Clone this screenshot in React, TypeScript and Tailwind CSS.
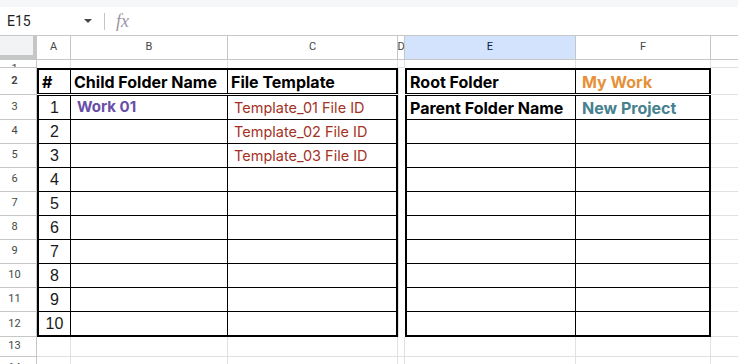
import React from "react";

const headerText = "font-['Roboto',sans-serif] text-[11px] text-[#444746]";

type BodyRow = {
  n: number;
  num: string;
  b?: string;
  c?: string;
  e?: string;
  f?: string;
};

const bodyRows: BodyRow[] = [
  { n: 3, num: "1", b: "Work 01", c: "Template_01 File ID", e: "Parent Folder Name", f: "New Project" },
  { n: 4, num: "2", c: "Template_02 File ID" },
  { n: 5, num: "3", c: "Template_03 File ID" },
  { n: 6, num: "4" },
  { n: 7, num: "5" },
  { n: 8, num: "6" },
  { n: 9, num: "7" },
  { n: 10, num: "8" },
  { n: 11, num: "9" },
  { n: 12, num: "10" },
];

function RowLabel({ n }: { n: number }) {
  return (
    <div
      className={`flex w-[37px] shrink-0 items-center justify-center border-b border-r border-[#c4c7c5] pr-[7px] ${headerText}`}
    >
      {n}
    </div>
  );
}

const ColHeader = ({ label, className }: { label: string; className: string }) => (
  <div
    className={`flex shrink-0 items-center justify-center overflow-hidden border-r border-[#c4c7c5] ${headerText} ${className}`}
  >
    {label}
  </div>
);

export default function App() {
  return (
    <div className="h-[364px] w-[738px] overflow-hidden bg-white font-['Inter',sans-serif]">
      {/* top strip */}
      <div className="h-[7px] bg-[#f6f7f9]" />

      {/* formula bar */}
      <div className="flex h-[29px] items-center border-b border-[#c4c7c5]">
        <div className="flex w-[98px] items-center justify-between pl-[7px] pr-[6px]">
          <span className="font-['Roboto',sans-serif] text-[14px] text-[#1f1f1f]">E15</span>
          <svg width="8" height="4" viewBox="0 0 8 4">
            <polygon points="0,0 8,0 4,4" fill="#444746" />
          </svg>
        </div>
        <div className="ml-[6px] h-[17px] w-px bg-[#c4c7c5]" />
        <span className="ml-[11px] font-['Liberation_Serif',serif] text-[18px] italic text-[#9a96a8]">
          fx
        </span>
      </div>

      {/* column headers */}
      <div className="flex h-[24px] border-b border-[#c4c7c5]">
        <div className="w-[37px] shrink-0 border-b-4 border-r-4 border-[#c4c7c5] bg-[#f1f3f4]" />
        <ColHeader label="A" className="w-[34px]" />
        <ColHeader label="B" className="w-[157px]" />
        <ColHeader label="C" className="w-[170px]" />
        <ColHeader label="D" className="w-[7px]" />
        <div className="flex w-[171px] shrink-0 items-center justify-center border-r border-[#c4c7c5] bg-[#d3e3fd] font-['Roboto',sans-serif] text-[11px] text-[#041e49]">
          E
        </div>
        <ColHeader label="F" className="w-[135px]" />
        <div className="flex-1" />
      </div>

      {/* row 1 */}
      <div className="flex h-[8px]">
        <div
          className={`flex h-[8px] w-[37px] shrink-0 justify-center overflow-hidden border-b border-r border-[#c4c7c5] pr-[7px] pt-[3px] leading-[11px] ${headerText}`}
        >
          <span className="h-[4px] overflow-hidden">1</span>
        </div>
        <div className="w-[34px] shrink-0 border-r border-[#e1e1e1]" />
        <div className="w-[157px] shrink-0 border-r border-[#e1e1e1]" />
        <div className="w-[170px] shrink-0 border-r border-[#e1e1e1]" />
        <div className="w-[7px] shrink-0 border-b border-r border-[#e1e1e1]" />
        <div className="w-[171px] shrink-0 border-r border-[#e1e1e1]" />
        <div className="w-[135px] shrink-0 border-r border-[#e1e1e1]" />
        <div className="flex-1 border-b border-[#e1e1e1]" />
      </div>

      {/* row 2: table headers */}
      <div className="flex h-[27px] text-[16px] font-bold text-black">
        <RowLabel n={2} />
        <div className="w-[34px] shrink-0">
          <div className="flex h-[26px] items-center border-b border-l-2 border-r border-t-2 border-black pl-[3px]">
            #
          </div>
        </div>
        <div className="w-[157px] shrink-0">
          <div className="flex h-[26px] items-center border-b border-r border-t-2 border-black pl-[3px]">
            Child Folder Name
          </div>
        </div>
        <div className="w-[170px] shrink-0">
          <div className="flex h-[26px] items-center border-b border-r-2 border-t-2 border-black pl-[3px]">
            File Template
          </div>
        </div>
        <div className="w-[7px] shrink-0 border-l border-[#e1e1e1]" />
        <div className="w-[171px] shrink-0">
          <div className="flex h-[26px] items-center border-b border-l-2 border-r border-t-2 border-black pl-[3px]">
            Root Folder
          </div>
        </div>
        <div className="w-[135px] shrink-0">
          <div className="flex h-[26px] items-center border-b border-r-2 border-t-2 border-black pl-[6px] text-[#e69138]">
            My Work
          </div>
        </div>
        <div className="flex-1 border-b border-[#e1e1e1]" />
      </div>

      {/* rows 3-12 */}
      {bodyRows.map((row) => {
        const first = row.n === 3;
        const last = row.n === 12;
        const height = first || last ? "h-[25px]" : "h-[24px]";
        const edge = first ? "border-t border-b" : last ? "border-b-2" : "border-b";
        return (
          <div key={row.n} className={`flex ${height}`}>
            <RowLabel n={row.n} />
            <div
              className={`flex w-[34px] shrink-0 items-center justify-center border-l-2 border-r border-black font-['Liberation_Sans',sans-serif] text-[16px] text-[#1a1a1a] ${edge}`}
            >
              {row.num}
            </div>
            <div
              className={`flex w-[157px] shrink-0 items-center border-r border-black pl-[6px] text-[15px] font-bold text-[#674ea7] ${edge}`}
            >
              {row.b}
            </div>
            <div
              className={`flex w-[170px] shrink-0 items-center border-r-2 border-black pl-[6px] text-[14.5px] text-[#a3321f] ${edge}`}
            >
              {row.c}
            </div>
            <div className="w-[7px] shrink-0 border-l border-[#e1e1e1]" />
            <div
              className={`flex w-[171px] shrink-0 items-center border-l-2 border-r border-black pl-[3px] text-[16px] font-bold text-black ${edge}`}
            >
              {row.e}
            </div>
            <div
              className={`flex w-[135px] shrink-0 items-center border-r-2 border-black pl-[6px] text-[16px] font-bold text-[#45818e] ${edge}`}
            >
              {row.f}
            </div>
            <div className="flex-1 border-b border-[#e1e1e1]" />
          </div>
        );
      })}

      {/* rows 13-14 */}
      {[13, 14].map((n) => (
        <div key={n} className={`flex ${n === 13 ? "h-[20px]" : "h-[24px]"}`}>
          <RowLabel n={n} />
          <div className="w-[34px] shrink-0 border-b border-r border-[#e1e1e1]" />
          <div className="w-[157px] shrink-0 border-b border-r border-[#e1e1e1]" />
          <div className="w-[170px] shrink-0 border-b border-r border-[#e1e1e1]" />
          <div className="w-[7px] shrink-0 border-b border-r border-[#e1e1e1]" />
          <div className="w-[171px] shrink-0 border-b border-r border-[#e1e1e1]" />
          <div className="w-[135px] shrink-0 border-b border-r border-[#e1e1e1]" />
          <div className="flex-1 border-b border-[#e1e1e1]" />
        </div>
      ))}
    </div>
  );
}
